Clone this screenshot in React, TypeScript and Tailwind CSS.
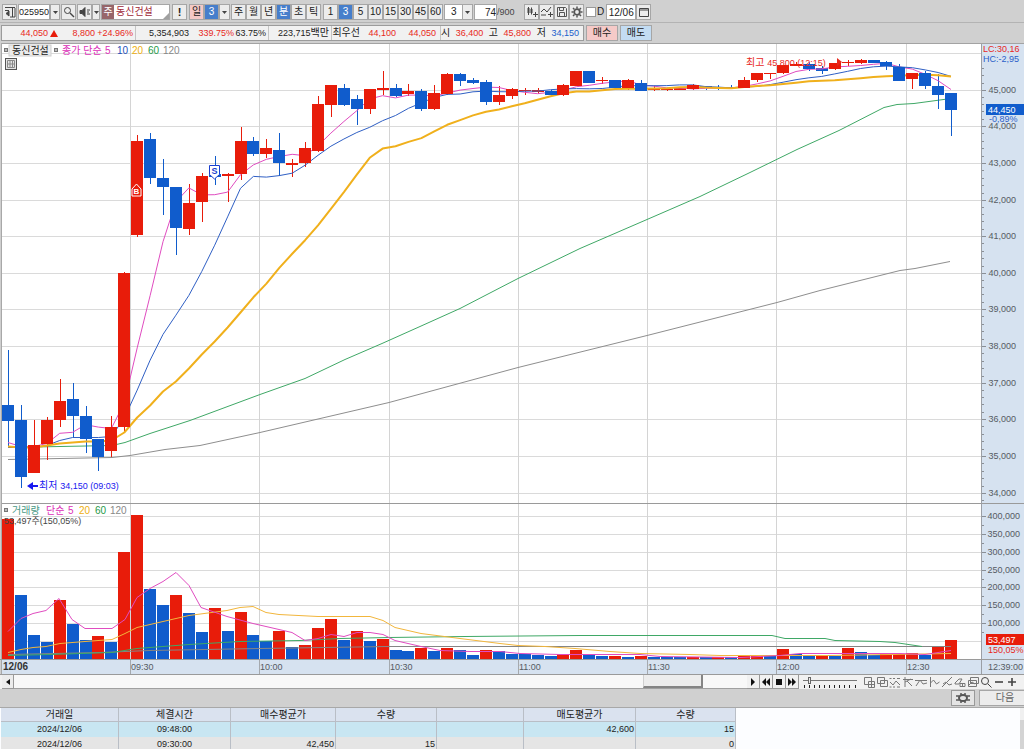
import React from "react";
import type { ReactNode } from "react";

type Tone = "R" | "B";
/** tone, open/close box top, box bottom, wick top, wick bottom, volume bar top */
type Candle = [Tone, number, number, number, number, number];
type Point = [number, number];

const RED = "#e81c0a";
const BLUE = "#105ccc";

const candles: Candle[] = [
  ["B", 405, 421, 350, 447, 519],
  ["B", 420, 477, 405, 488, 595],
  ["R", 445, 473, 420, 473, 635],
  ["R", 420, 444, 417, 460, 642],
  ["R", 401, 420, 379, 427, 600],
  ["B", 399, 416, 383, 437, 624],
  ["B", 416, 439, 406, 453, 640],
  ["B", 439, 457, 439, 471, 636],
  ["R", 427, 451, 416, 457, 642],
  ["R", 273, 427, 272, 431, 552],
  ["R", 141, 235, 135, 237, 515],
  ["B", 139, 178, 133, 184, 589],
  ["B", 178, 187, 159, 215, 605],
  ["B", 187, 228, 187, 255, 595],
  ["R", 203, 229, 184, 235, 613],
  ["R", 176, 202, 173, 222, 632],
  ["B", 174, 177, 156, 185, 608],
  ["R", 174, 176, 173, 202, 631],
  ["R", 141, 174, 127, 180, 612],
  ["B", 141, 154, 137, 156, 635],
  ["R", 148, 154, 139, 158, 641],
  ["B", 150, 163, 133, 176, 631],
  ["R", 163, 165, 159, 177, 647],
  ["R", 148, 163, 142, 167, 645],
  ["R", 104, 151, 96, 152, 628],
  ["R", 85, 105, 85, 117, 619],
  ["B", 88, 105, 84, 106, 640],
  ["B", 99, 109, 95, 125, 631],
  ["R", 89, 109, 89, 114, 641],
  ["R", 88, 90, 71, 95, 639],
  ["B", 88, 96, 84, 97, 650],
  ["R", 91, 94, 84, 96, 651],
  ["B", 91, 109, 89, 111, 648],
  ["R", 93, 109, 85, 110, 651],
  ["R", 74, 94, 73, 95, 648],
  ["B", 74, 81, 73, 86, 650],
  ["B", 80, 83, 78, 84, 655],
  ["B", 82, 102, 80, 105, 650],
  ["R", 95, 102, 86, 105, 651],
  ["R", 89, 96, 88, 99, 654],
  ["R", 90, 91, 88, 95, 654],
  ["R", 90, 92, 88, 94, 655],
  ["B", 91, 95, 90, 96, 656],
  ["R", 85, 95, 84, 96, 654],
  ["R", 71, 86, 71, 86, 650],
  ["B", 71, 83, 71, 83, 654],
  ["R", 80, 81, 77, 84, 656],
  ["B", 80, 88, 80, 90, 656],
  ["R", 80, 88, 79, 90, 657],
  ["B", 83, 91, 80, 91, 656],
  ["R", 89, 90, 86, 91, 657],
  ["R", 89, 90, 88, 91, 657],
  ["R", 88, 90, 88, 90, 657],
  ["R", 85, 89, 84, 90, 657],
  ["B", 86, 88, 86, 90, 657],
  ["B", 87, 88, 85, 90, 657],
  ["B", 87, 88, 85, 88, 657],
  ["R", 80, 88, 77, 88, 655],
  ["R", 73, 80, 73, 82, 655],
  ["R", 73, 74, 73, 79, 656],
  ["R", 65, 73, 65, 74, 649],
  ["R", 64, 66, 62, 66, 654],
  ["B", 64, 69, 62, 71, 655],
  ["B", 68, 71, 66, 74, 655],
  ["R", 63, 69, 63, 70, 656],
  ["R", 62, 63, 60, 66, 648],
  ["R", 60, 63, 59, 64, 652],
  ["B", 60, 63, 60, 63, 655],
  ["B", 62, 66, 61, 70, 654],
  ["B", 67, 81, 64, 81, 654],
  ["R", 73, 79, 73, 89, 653],
  ["B", 73, 86, 71, 89, 655],
  ["B", 86, 95, 74, 109, 646],
  ["B", 93, 110, 93, 136, 640],
];

const volumeTones =
  "RBBBRBBRBRRBBRBBRBRBBRBRRRBRBRBBRBRBBRBBBBBRRBBRBRBBBRBRBRRBRBBRBRBBRRRBRR";

const cx = (i: number) => 8 + i * 12.918;
const closes = candles.map(([tone, top, bottom]) => (tone === "R" ? top : bottom));

function average(period: number, head: number[]): Point[] {
  return closes.map((_, i) => {
    if (i < head.length) return [cx(i), head[i]];
    const part = closes.slice(Math.max(0, i - period + 1), i + 1);
    return [cx(i), part.reduce((a, b) => a + b, 0) / part.length];
  });
}

const ma5 = average(5, [442, 446, 446, 443]);
const ma10 = average(10, [447, 447, 447, 445, 440, 437, 437, 437, 436]);
const ma20 = average(20, [
  446, 447, 447, 445, 443, 442, 441, 441, 440, 432, 417, 405, 391, 381, 368, 354, 341, 327, 312,
]);
const ma60: Point[] = [
  [8, 447], [60, 446], [112, 445], [125, 442], [150, 433], [190, 420], [260, 394], [305, 378],
  [345, 359], [382, 343], [420, 326], [460, 308], [518, 278], [580, 248], [647, 219], [700, 196],
  [750, 172], [797, 149], [839, 130], [884, 107], [897, 104], [914, 103], [951, 98],
];
const ma120: Point[] = [
  [8, 459], [60, 458], [112, 457], [130, 455], [165, 449], [200, 445], [260, 432], [389, 402],
  [518, 367], [647, 335], [777, 302], [820, 290], [880, 275], [900, 270], [915, 268], [950, 261],
];
const vol5: Point[] = [
  [8, 631], [21, 618], [33, 613], [46, 610], [59, 598], [72, 619], [85, 628], [112, 628],
  [125, 619], [137, 597], [150, 588], [163, 581], [176, 572], [189, 585], [201, 607], [227, 616],
  [253, 623], [292, 632], [305, 640], [318, 638], [331, 634], [344, 636], [357, 632], [370, 632],
  [383, 634], [395, 640], [408, 643], [421, 646], [440, 650], [470, 651], [500, 651], [520, 653],
  [560, 654], [640, 654], [660, 656], [740, 657], [780, 655], [800, 653], [900, 653], [925, 654],
  [951, 650],
];
const vol20: Point[] = [
  [8, 652], [21, 649], [33, 647], [46, 646], [60, 643], [85, 641], [112, 639], [125, 633],
  [137, 627], [163, 621], [189, 615], [227, 610], [240, 607], [253, 606], [266, 612], [279, 614],
  [318, 616], [370, 616], [383, 620], [395, 627], [421, 633], [460, 638], [500, 643], [518, 645],
  [545, 646], [575, 648], [610, 651], [640, 653], [690, 654], [720, 655], [830, 655], [951, 653],
];
const vol60: Point[] = [
  [8, 655], [50, 654], [112, 652], [137, 648], [163, 646], [189, 644], [240, 641], [300, 640],
  [340, 638], [389, 637], [465, 636], [580, 635], [772, 635], [785, 638], [825, 638], [835, 640],
  [880, 641], [895, 642], [922, 646],
];
const vol120: Point[] = [[8, 654], [100, 652], [150, 650], [260, 648], [389, 646], [951, 646]];

const path = (points: Point[]) =>
  points.map(([x, y]) => `${x.toFixed(1)},${(y + 0.5).toFixed(1)}`).join(" ");

const priceLabels = Array.from({ length: 12 }, (_, i) => ({
  text: `${45 - i},000`,
  y: Math.round(89.6 + i * 36.64),
}));
const volumeLabels = Array.from({ length: 7 }, (_, i) => ({
  text: `${400 - i * 50},000`,
  y: Math.round(516 + i * 17.85),
}));
const timeLabels: [number, string][] = [
  [130, "09:30"], [259, "10:00"], [389, "10:30"], [518, "11:00"], [647, "11:30"], [776, "12:00"],
  [906, "12:30"],
];

function Line({ points, color, width = 1 }: { points: Point[]; color: string; width?: number }) {
  return <polyline points={path(points)} fill="none" stroke={color} strokeWidth={width} strokeLinejoin="round" />;
}

function Square({ x, y }: { x: number; y: number }) {
  return <rect x={x + 0.5} y={y + 0.5} width="3" height="3" fill="#bbb" stroke="#777" />;
}

function Chart() {
  return (
    <svg viewBox="0 43 1024 632" className="block h-auto w-full shrink-0" role="img" aria-label="동신건설 3분 차트">
      <rect x="0" y="43" width="1024" height="632" fill="#fff" />
      <g shapeRendering="crispEdges">
        <rect x="981" y="44" width="43" height="631" fill="#d6e2f0" />
        <rect x="1" y="660" width="1023" height="14" fill="#d6e2f0" />
        {[53, ...priceLabels.map((l) => l.y)].map((y) => (
          <rect key={y} x="2" y={y} width="979" height="1" fill="#dadada" />
        ))}
        {[...volumeLabels.map((l) => l.y), 641].map((y) => (
          <rect key={y} x="2" y={y} width="979" height="1" fill="#dadada" />
        ))}
        {timeLabels.map(([x]) => (
          <g key={x}>
            <rect x={x} y="44" width="1" height="616" fill="#d4d4d4" />
            <rect x={x} y="660" width="1" height="14" fill="#a5a9ae" />
          </g>
        ))}
        <rect x="0" y="503" width="1024" height="1" fill="#9a9a9a" />
        <rect x="0" y="43" width="1024" height="1" fill="#a3a3a3" />
        <rect x="0" y="43" width="1" height="632" fill="#cfcfcf" />
        <rect x="1" y="43" width="1" height="632" fill="#a8a8a8" />
        <rect x="981" y="44" width="1" height="631" fill="#9b9fa5" />
        {priceLabels.map(({ y }) => (
          <g key={y} fill="#8a8f96">
            <rect x="982" y={y} width="4" height="1" />
            {[-22, -15, -7, 7].map((d) => (
              <rect key={d} x="982" y={y + d} width="2" height="1" />
            ))}
          </g>
        ))}
        {volumeLabels.map(({ y }) => (
          <g key={y} fill="#8a8f96">
            <rect x="982" y={y} width="4" height="1" />
            <rect x="982" y={y + 9} width="2" height="1" />
          </g>
        ))}
        {candles.map(([, , , , , top], i) => (
          <rect
            key={i}
            x={Math.round(cx(i) - 6)}
            y={top}
            width="12"
            height={659 - top}
            fill={volumeTones[i] === "R" ? RED : BLUE}
          />
        ))}
      </g>

      <Line points={vol120} color="#858585" />
      <Line points={vol60} color="#3fa866" />
      <Line points={vol20} color="#f2b63c" />
      <Line points={vol5} color="#e04cc0" />
      <rect x="0" y="659" width="1024" height="1" fill="#9a9a9a" />
      <rect x="0" y="674" width="1024" height="1" fill="#9a9a9a" />

      <Line points={ma120} color="#8e8e8e" />
      <Line points={ma60} color="#3fa866" />
      <g shapeRendering="crispEdges">
        {candles.map(([tone, top, bottom, high, low], i) => (
          <g key={i} fill={tone === "R" ? RED : BLUE}>
            <rect x={Math.round(cx(i))} y={high} width="1" height={low - high} />
            <rect x={Math.round(cx(i) - 6)} y={top} width="12" height={bottom - top} />
          </g>
        ))}
      </g>
      <Line points={ma5} color="#e04cc0" />
      <Line points={ma10} color="#2f5fc4" />
      <Line points={ma20} color="#f0b01c" width={2} />
      <g shapeRendering="crispEdges">
        {candles.map(([tone, top, bottom], i) =>
          bottom - top > 3 ? (
            <rect
              key={i}
              x={Math.round(cx(i) - 6)}
              y={top}
              width="12"
              height={bottom - top}
              fill={tone === "R" ? RED : BLUE}
            />
          ) : null,
        )}
      </g>

      <g>
        <path d="M132 196v-7l4.500-5 4.500 5v7z" fill={RED} stroke="#fff" />
        <text x="136.500" y="194" textAnchor="middle" fontWeight="700" className="text-[8px]" fill="#fff">B</text>
        <path d="M209.500 165.500h10v9l-5 4.500-5-4.500z" fill="#fff" stroke="#1a3fd0" />
        <text x="214.500" y="174" textAnchor="middle" fontWeight="700" className="text-[9px]" fill="#1a3fd0">S</text>
      </g>

      <rect x="9" y="45" width="42" height="11" fill="#ececec" stroke="#cfcfcf" />
      <Square x={4} y={48} />
      <Square x={54} y={48} />
      <g className="text-[10px]">
        <text x="12" y="54" fill="#222">동신건설</text>
        <text x="62" y="54" fill="#dc30b8">종가 단순</text>
        <text x="105" y="54" fill="#dc30b8">5</text>
        <text x="117" y="54" fill="#2450b8">10</text>
        <text x="132" y="54" fill="#eeb010">20</text>
        <text x="148" y="54" fill="#1f9a48">60</text>
        <text x="163" y="54" fill="#888">120</text>
      </g>
      <g stroke="#555" fill="none">
        <rect x="5.500" y="58.500" width="11" height="11" fill="#e4e4e4" />
        <path d="M7.500 60.500h7v7h-7zM7.500 64h7M10 60.500v7M12.500 60.500v7" stroke="#8a8a8a" />
      </g>

      <g fill="#e8281c" className="text-[10px]">
        <text x="746" y="66">최고 <tspan className="text-[9px]">45,800 (12:15)</tspan></text>
        <path d="M837 58l5 4-5 4z" />
      </g>
      <g fill="#1818f0" className="text-[10px]">
        <path d="M27 486l6-4v3h5v2h-5v3z" />
        <text x="39" y="489">최저 <tspan className="text-[9px]">34,150 (09:03)</tspan></text>
      </g>

      <Square x={4} y={508} />
      <g className="text-[10px]">
        <text x="12" y="514" fill="#4a9a86">거래량</text>
        <text x="46" y="514" fill="#dc30b8">단순</text>
        <text x="68" y="514" fill="#dc30b8">5</text>
        <text x="79" y="514" fill="#eeb010">20</text>
        <text x="95" y="514" fill="#1f9a48">60</text>
        <text x="110" y="514" fill="#888">120</text>
        <text x="4" y="524" className="text-[9px]" fill="#444">53,497주(150,05%)</text>
      </g>

      <g className="text-[9px]" fill="#555b63">
        {priceLabels.map(({ y, text }) => (
          <text key={text} x="1016" y={y + 3} textAnchor="end">{text}</text>
        ))}
        {volumeLabels.map(({ y, text }) => (
          <text key={text} x="1020" y={y + 3} textAnchor="end">{text}</text>
        ))}
        {timeLabels.map(([x, text]) => (
          <text key={text} x={x + 1} y="670">{text}</text>
        ))}
        <text x="988" y="670">12:39:00</text>
        <text x="3" y="670" fontWeight="700" className="text-[10px]" fill="#333">12/06</text>
      </g>
      <g className="text-[9px]">
        <text x="983" y="52" fill="#e8281c">LC:30,16</text>
        <text x="983" y="62" fill="#2b5fc9">HC:-2,95</text>
        <text x="989" y="122" fill="#2b5fc9">-0,89%</text>
        <rect x="986" y="104" width="38" height="11" fill={BLUE} />
        <text x="988" y="113" fill="#fff">44,450</text>
        <text x="988" y="653" fill="#e8281c">150,05%</text>
        <rect x="986" y="634" width="38" height="11" fill={RED} />
        <text x="988" y="643" fill="#fff">53,497</text>
      </g>
    </svg>
  );
}

const box = "flex h-4 shrink-0 items-center justify-center border border-[#a6a6a6] ";

function Tool({ label, children, tone = "bg-[#ececec] text-[#222]", width = "w-[15px]" }: {
  label?: string;
  children: ReactNode;
  tone?: string;
  width?: string;
}) {
  return (
    <button type="button" aria-label={label} className={`${box}${width} ${tone}`}>
      {children}
    </button>
  );
}

function Caret() {
  return (
    <svg viewBox="0 0 5 3" className="h-[3px] w-[5px] shrink-0" fill="#444" aria-hidden="true">
      <path d="M0 0h5L2.500 3z" />
    </svg>
  );
}

function Icon({ children, color = "#444" }: { children: ReactNode; color?: string }) {
  return (
    <svg viewBox="0 0 12 12" className="h-3 w-3 shrink-0" fill="none" stroke={color} aria-hidden="true">
      {children}
    </svg>
  );
}

const active = "bg-[#467ecb] text-white";

function Toolbar() {
  return (
    <header className="flex h-[23px] shrink-0 items-center border-b border-[#b3b3b3] pt-0.5 pl-0.5">
      <Tool label="창 목록">
        <Icon>
          <path d="M1 1.500h10M1 4.500h4M8.500 2v9M11 2v9M6 11h5" />
          <path d="M5 5L2 7.500 5 10z" fill="#444" />
        </Icon>
      </Tool>
      <input aria-label="종목코드" defaultValue="025950" className="ml-px h-4 w-8 shrink-0 border border-[#a6a6a6] bg-white text-center" />
      <Tool label="종목코드 목록" width="w-[10px]"><Caret /></Tool>
      <div className="ml-px flex">
        <Tool label="종목 검색">
          <Icon><circle cx="4.500" cy="4.500" r="3" /><path d="M7 7l4 4" strokeWidth="1.500" /></Icon>
        </Tool>
      </div>
      <div className="ml-px flex">
        <Tool label="음성"><Icon><path d="M1 4.500h2l3-3v9l-3-3H1z" fill="#444" /><path d="M8 4h3M8 6h2M8 8h3" /></Icon></Tool>
        <Tool label="음성 설정" width="w-2"><Caret /></Tool>
      </div>
      <div className="ml-px flex h-4 w-[69px] shrink-0 items-center border border-[#a6a6a6] bg-white text-[10px]">
        <span className="flex h-3.5 w-3 items-center justify-center bg-[#97666a] text-white">주</span>
        <span className="ml-0.5 text-[#a02838]">동신건설</span>
        <svg viewBox="0 0 6 6" className="mt-auto ml-auto h-1.5 w-1.5" fill="#a0a0a0" aria-hidden="true"><path d="M6 0v6H0z" /></svg>
      </div>
      <div className="ml-0.5 flex text-[11px]"><Tool label="종목 정보"><b>!</b></Tool></div>
      <div className="ml-0.5 flex text-[10px]">
        <Tool tone="bg-[#f4c9c6] text-[#222]">일</Tool>
        <Tool tone={active}>3</Tool>
        <Tool label="주기 목록" width="w-[11px]"><Caret /></Tool>
      </div>
      <div className="ml-px flex text-[10px]">
        <Tool>주</Tool>
        <Tool>월</Tool>
        <Tool>년</Tool>
        <Tool tone={active}>분</Tool>
        <Tool>초</Tool>
        <Tool>틱</Tool>
      </div>
      <div className="ml-0.5 flex text-[10px]">
        <Tool>1</Tool>
        <Tool tone={active}>3</Tool>
        <Tool>5</Tool>
        <Tool>10</Tool>
        <Tool>15</Tool>
        <Tool>30</Tool>
        <Tool>45</Tool>
        <Tool>60</Tool>
      </div>
      <div className="ml-px grid h-4 w-[29px] shrink-0 border border-[#a6a6a6] bg-white text-[10px]">
        <select aria-label="분 주기" defaultValue="3" className="col-start-1 row-start-1 h-3.5 w-full appearance-none bg-white pl-1.5">
          <option>3</option>
          <option>5</option>
        </select>
        <span className="pointer-events-none col-start-1 row-start-1 flex w-[10px] items-center justify-center justify-self-end border-l border-[#a6a6a6] bg-[#ececec]"><Caret /></span>
      </div>
      <input aria-label="표시 봉수" defaultValue="74" className="ml-px h-4 w-[23px] shrink-0 border border-[#a6a6a6] bg-white text-right text-[10px]" />
      <span className="w-[19px] shrink-0 text-[#444]">/900</span>
      <div className="ml-2 flex">
        <Tool label="종목 추가"><Icon><path d="M2.500 2v5M5.500 3v4" strokeWidth="2" /><path d="M2.500 1v8M5.500 1.500v7M9.500 6v5M7 8.500h5" /></Icon></Tool>
        <Tool label="지표 추가"><Icon><path d="M0 6l3-3 3 3 4-5M0 9h5M9.500 6v5M7 8.500h5" /></Icon></Tool>
        <Tool label="저장"><Icon color="#555"><path d="M1.500 1.500h8l1 1v8h-9zM3.500 1.500v3h4v-3M3.500 10.500v-4h5v4" /></Icon></Tool>
        <Tool label="환경설정"><Icon color="#555"><circle cx="6" cy="6" r="2.800" strokeWidth="1.800" /><path d="M6 .5v2M6 9.500v2M.5 6h2M9.500 6h2M2 2l1.500 1.500M8.500 8.500L10 10M10 2L8.500 3.500M2 10l1.500-1.500" strokeWidth="1.500" /></Icon></Tool>
      </div>
      <label className="ml-0.5 flex items-center gap-px text-[10px]">
        <input type="checkbox" className="h-2.5 w-2.5 appearance-none border border-[#999] bg-white" />
        D
      </label>
      <div className="ml-0.5 flex">
        <input aria-label="날짜" defaultValue="12/06" className="h-4 w-[30px] shrink-0 border border-[#a6a6a6] bg-white text-center text-[10px]" />
        <Tool label="달력"><Icon><path d="M1.500 2.500h9v8h-9zM1.500 4h9" /></Icon></Tool>
      </div>
    </header>
  );
}

function QuoteBar() {
  return (
    <section aria-label="현재가" className="flex h-5 shrink-0 items-center gap-0.5 pl-px">
      <div className="flex h-4 shrink-0 items-center divide-x divide-[#c4c4c4] border border-[#9b9b9b] bg-[#f1f1f1] leading-none text-[#e8281c]">
        <div className="flex h-full w-[134px] items-center justify-end pr-0.5">
          <span>44,050</span>
          <svg viewBox="0 0 8 7" className="ml-0.5 h-[7px] w-2" fill={RED} aria-label="상승"><path d="M4 0l4 7H0z" /></svg>
          <span className="w-[37px] text-right">8,800</span>
          <span className="w-[38px] text-right">+24.96%</span>
        </div>
        <div className="flex h-full w-[133px] items-center justify-end pr-0.5">
          <span className="text-[#222]">5,354,903</span>
          <span className="w-[45px] text-right">339.75%</span>
          <span className="w-8 text-right text-[#222]">63.75%</span>
        </div>
        <div className="flex h-full w-[63px] items-center justify-end pr-0.5 text-[#222]">
          223,715<span className="text-[10px]">백만</span>
        </div>
        <div className="flex h-full w-[109px] items-center justify-end pr-1">
          <span className="text-[10px] text-[#222]">최우선</span>
          <span className="w-9 text-right">44,100</span>
          <span className="w-10 text-right">44,050</span>
        </div>
        <dl className="flex h-full w-[142px] items-center justify-between pr-1">
          <dt className="text-[10px] text-[#222]">시</dt>
          <dd>36,400</dd>
          <dt className="text-[10px] text-[#222]">고</dt>
          <dd>45,800</dd>
          <dt className="text-[10px] text-[#222]">저</dt>
          <dd className="text-[#2060cc]">34,150</dd>
        </dl>
      </div>
      <button type="button" className="h-4 w-8 shrink-0 border border-[#a6a6a6] bg-[#f5cac8] text-[10px] leading-none text-[#222]">매수</button>
      <button type="button" className="h-4 w-8 shrink-0 border border-[#a6a6a6] bg-[#c3dcf2] text-[10px] leading-none text-[#222]">매도</button>
    </section>
  );
}

const drawTools: [string, string][] = [
  ["새 창", "M1.500 1.500h7v7h-7zM5.500 5.500h6v6h-6zM8.500 5.500v6M5.500 8.500h6"],
  ["복사", "M1.500 1.500h7v6h-7zM4.500 4.500h7v6h-7z"],
  ["점선 영역", "M.5 2.500h2M4 2.500h2M8 2.500h3M1 6l3 3 3-4 4 4M.5 11h2M4 11h2M8 11h3"],
  ["추세선", "M1 3.500h10M3 1v10M3 6l6-3M5 5l5 5"],
  ["가로선", "M0 4.500h12M1 10l4-6 3 4 4-1"],
  ["세로선", "M2.500 1v10M2.500 7l3-3 3 4 3-2"],
  ["대각선", "M1 11L11 1M2 8l3-2 3 3 3-1"],
  ["도형", "M1 7l4-4h3l-3 5H1zM6 7.500h5v3H6zM8.500 7v4"],
  ["창 정렬", "M3.500 1.500h8v6h-8zM1.500 4.500h8v6h-8zM2 9l3-3 3 2"],
  ["확대경", "M5 1.500a3.500 3.500 0 1 0 0 7 3.500 3.500 0 1 0 0-7M8 8l3.500 3.500"],
  ["축소", "M2 6h8"],
  ["확대", "M2 6h8M6 2v8"],
];

const players: [string, string][] = [
  ["재생", "M4 2l4 4-4 4z"],
  ["뒤로", "M6 2L2 6l4 4zM10 2L6 6l4 4z"],
  ["정지", "M3 3h6v6H3z"],
  ["앞으로", "M2 2l4 4-4 4zM6 2l4 4-4 4z"],
];

function ScrollRow() {
  return (
    <div className="flex h-3.5 shrink-0 items-center bg-[#f1f1f1] pl-0.5">
      <button type="button" aria-label="왼쪽" className="flex h-full w-3 shrink-0 items-center justify-center border-r border-b border-[#999] bg-[#ececec]">
        <svg viewBox="0 0 4 6" className="h-1.5 w-1" fill="#111"><path d="M4 0v6L0 3z" /></svg>
      </button>
      <div className="flex h-full grow justify-end border-b border-[#a0a0a0] bg-[#f8f8f8] pr-11">
        <div className="h-full w-[60px] border-r-2 border-b-2 border-l border-[#858585] border-l-[#d0d0d0] bg-[#ededed]" />
      </div>
      {players.map(([label, d]) => (
        <button key={label} type="button" aria-label={label} className="flex h-full w-[13px] shrink-0 items-center justify-center border-r border-b border-[#999] bg-[#f1f1f1]">
          <svg viewBox="0 0 12 12" className="h-3 w-3" fill="#111"><path d={d} /></svg>
        </button>
      ))}
      <div className="ml-1 flex w-[54px] shrink-0 flex-col">
        <input
          type="range"
          aria-label="재생 속도"
          min="0"
          max="10"
          defaultValue="1"
          className="h-[7px] w-full appearance-none bg-[linear-gradient(#777,#777)] bg-[length:100%_1px] bg-center bg-no-repeat [&::-webkit-slider-thumb]:h-[7px] [&::-webkit-slider-thumb]:w-[3px] [&::-webkit-slider-thumb]:appearance-none [&::-webkit-slider-thumb]:border [&::-webkit-slider-thumb]:border-[#666] [&::-webkit-slider-thumb]:bg-[#eee]"
        />
        <svg viewBox="0 0 54 3" className="mt-px h-[3px] w-full" stroke="#222" aria-hidden="true">
          <path d="M1.500 0v3M6.500 0v3M11.500 0v3M16.500 0v3M21.500 0v3M26.500 0v3M31.500 0v3M36.500 0v3M41.500 0v3M46.500 0v3M52.500 0v3" />
        </svg>
      </div>
      <div className="ml-1.5 flex h-full shrink-0 items-center gap-px pr-1">
        {drawTools.map(([label, d], i) => (
          <button key={label} type="button" aria-label={label} className="flex w-3 items-center justify-center">
            <svg viewBox="0 0 12 12" className="h-3 w-3" fill="none" stroke={i > 8 ? "#444" : "#777"} strokeWidth={i > 9 ? 1.6 : 1}>
              <path d={d} />
            </svg>
          </button>
        ))}
      </div>
      <div className="w-0.5 shrink-0" />
    </div>
  );
}

const headers = ["거래일", "체결시간", "매수평균가", "수량", "", "매도평균가", "수량"];
const rows = [
  ["2024/12/06", "09:48:00", "", "", "", "42,600", "15"],
  ["2024/12/06", "09:30:00", "42,450", "15", "", "", "0"],
];

function Trades() {
  return (
    <div className="flex min-h-0 grow border-t border-[#a8a8a8] bg-[#fcfdff] pl-px">
      <table className="w-[735px] shrink-0 table-fixed border-separate border-spacing-0 self-start leading-none text-[#222]">
        <colgroup>
          <col className="w-[118px]" />
          <col className="w-[112px]" />
          <col className="w-[105px]" />
          <col className="w-[101px]" />
          <col className="w-[87px]" />
          <col className="w-[112px]" />
          <col className="w-[100px]" />
        </colgroup>
        <thead>
          <tr className="h-3.5 bg-[#dae2ef] text-[10px]">
            {headers.map((h, i) => (
              <th key={i} scope="col" className="border-r border-b border-[#b9bec6] p-0 font-normal">{h}</th>
            ))}
          </tr>
        </thead>
        <tbody>
          {rows.map((row, r) => (
            <tr key={r} className={r === 0 ? "h-[15px] bg-[#c8e6f2]" : "h-[15px] bg-[#e5e5e5]"}>
              {row.map((cell, i) => (
                <td key={i} className={i < 2 ? "border-r border-[#b9bec6] p-0 text-center" : "border-r border-[#b9bec6] p-0 pr-px text-right"}>{cell}</td>
              ))}
            </tr>
          ))}
        </tbody>
      </table>
      <div className="ml-auto flex w-1 flex-col bg-[#d4d4d4]">
        <div className="h-3 bg-[#f0f0f0]" />
      </div>
    </div>
  );
}

export default function App() {
  return (
    <main className="flex h-screen flex-col overflow-hidden bg-[#d0d0d0] font-['Liberation_Sans','Noto_Sans_CJK_KR',sans-serif] text-[9px] leading-none text-[#222]">
      <Toolbar />
      <QuoteBar />
      <Chart />
      <ScrollRow />
      <div className="flex h-[18px] shrink-0 items-center justify-end gap-1">
        <button type="button" aria-label="설정" className="flex h-4 w-6 items-center justify-center border border-[#999] bg-[#e4e4e4]">
          <svg viewBox="0 0 14 10" className="h-2.5 w-3.5" fill="none" stroke="#555" aria-hidden="true">
            <ellipse cx="7" cy="5" rx="4" ry="3" strokeWidth="2" />
            <path d="M5 0v2M9 0v2M5 8v2M9 8v2M0 3h3M0 7h3M11 3h3M11 7h3" strokeWidth="1.500" />
          </svg>
        </button>
        <button type="button" className="h-4 w-[45px] border border-r-0 border-[#a6a6a6] bg-[#ececec] pl-1.5 text-[10px] text-[#666]">다음</button>
      </div>
      <Trades />
    </main>
  );
}
